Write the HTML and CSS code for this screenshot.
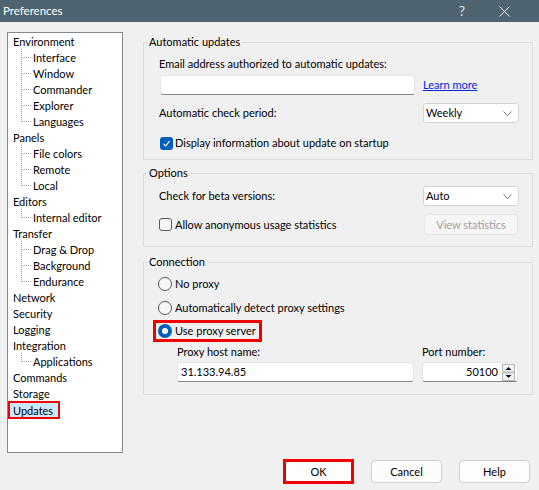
FILE: index.html
```html
<!DOCTYPE html>
<html lang="en">
<head>
    <meta charset="UTF-8">
    <title>Preferences</title>
    <link rel="stylesheet" href="styles.css">
</head>
<body>
    <div class="titlebar">
        <span class="title">Preferences</span>
        <span class="help-btn">?</span>
        <svg class="close-btn" width="11" height="11" viewBox="0 0 11 11">
            <path d="M0.5 0.5L10.5 10.5M10.5 0.5L0.5 10.5" stroke="#e4e8ea" stroke-width="1"/>
        </svg>
    </div>

    <div class="main">
        <ul class="tree">
            <li class="node">Environment</li>
            <li class="leaf">Interface</li>
            <li class="leaf">Window</li>
            <li class="leaf">Commander</li>
            <li class="leaf">Explorer</li>
            <li class="leaf last">Languages</li>
            <li class="node">Panels</li>
            <li class="leaf">File colors</li>
            <li class="leaf">Remote</li>
            <li class="leaf last">Local</li>
            <li class="node">Editors</li>
            <li class="leaf last">Internal editor</li>
            <li class="node">Transfer</li>
            <li class="leaf">Drag &amp; Drop</li>
            <li class="leaf">Background</li>
            <li class="leaf last">Endurance</li>
            <li class="node">Network</li>
            <li class="node">Security</li>
            <li class="node">Logging</li>
            <li class="node">Integration</li>
            <li class="leaf last">Applications</li>
            <li class="node">Commands</li>
            <li class="node">Storage</li>
            <li class="node"><span class="selected">Updates</span></li>
        </ul>

        <div class="pages">
            <fieldset class="group group-updates">
                <legend>Automatic updates</legend>
                <div class="group-body">
                    <div class="label-row">Email address authorized to automatic updates:</div>
                    <div class="input-row">
                        <div class="textbox email-box"></div>
                        <a class="link" href="#">Learn more</a>
                    </div>
                    <div class="field-row">
                        <span class="field-label">Automatic check period:</span>
                        <div class="combo">
                            <span>Weekly</span>
                            <svg width="9" height="5" viewBox="0 0 9 5"><path d="M0.5 0.5L4.5 4.5L8.5 0.5" fill="none" stroke="#7a7a7a" stroke-width="1"/></svg>
                        </div>
                    </div>
                    <label class="check check-startup">
                        <svg class="box" width="13" height="13" viewBox="0 0 13 13">
                            <rect width="13" height="13" rx="3" fill="#005fb8"/>
                            <path d="M3.5 6.8L5.6 8.9L9.6 4.2" fill="none" stroke="#fff" stroke-width="1.1"/>
                        </svg>
                        <span>Display information about update on startup</span>
                    </label>
                </div>
            </fieldset>

            <fieldset class="group group-options">
                <legend>Options</legend>
                <div class="group-body">
                    <div class="field-row beta-row">
                        <span class="field-label">Check for beta versions:</span>
                        <div class="combo">
                            <span>Auto</span>
                            <svg width="9" height="5" viewBox="0 0 9 5"><path d="M0.5 0.5L4.5 4.5L8.5 0.5" fill="none" stroke="#7a7a7a" stroke-width="1"/></svg>
                        </div>
                    </div>
                    <div class="field-row stats-row">
                        <label class="check">
                            <span class="box unchecked"></span>
                            <span>Allow anonymous usage statistics</span>
                        </label>
                        <button class="btn-disabled" disabled>View statistics</button>
                    </div>
                </div>
            </fieldset>

            <fieldset class="group group-connection">
                <legend>Connection</legend>
                <div class="group-body">
                    <label class="radio radio-first">
                        <span class="dot"></span>
                        <span>No proxy</span>
                    </label>
                    <label class="radio">
                        <span class="dot"></span>
                        <span>Automatically detect proxy settings</span>
                    </label>
                    <label class="radio radio-marked">
                        <span class="dot on"></span>
                        <span>Use proxy server</span>
                    </label>
                    <div class="proxy-labels">
                        <span class="host-col">Proxy host name:</span>
                        <span class="port-col">Port number:</span>
                    </div>
                    <div class="proxy-inputs">
                        <div class="textbox host-box">31.133.94.85</div>
                        <div class="textbox port-box">
                            <span>50100</span>
                            <svg class="spin" width="13" height="17" viewBox="0 0 13 17">
                                <rect x="0.5" y="0.5" width="12" height="7.5" fill="#f4f4f4" stroke="#b4b4b4"/>
                                <rect x="0.5" y="9" width="12" height="7.5" fill="#f4f4f4" stroke="#b4b4b4"/>
                                <path d="M3.5 6L6.5 3L9.5 6Z" fill="#111"/>
                                <path d="M3.5 11L6.5 14L9.5 11Z" fill="#111"/>
                            </svg>
                        </div>
                    </div>
                </div>
            </fieldset>
        </div>
    </div>

    <div class="footer">
        <button class="btn btn-marked">OK</button>
        <button class="btn">Cancel</button>
        <button class="btn">Help</button>
    </div>
</body>
</html>
```

FILE: styles.css
```css
* {
    box-sizing: border-box;
}

body {
    margin: 0;
    background: #f0f0f0;
    font-family: Lato, "Noto Sans", sans-serif;
    font-size: 11px;
    line-height: 16px;
    color: #000;
}

/* window caption */
.titlebar {
    height: 22px;
    background: #4f6471;
    display: flex;
    align-items: center;
    padding: 0 0 0 3px;
    color: #fff;
}

.title {
    flex: 1;
    font-size: 11.5px;
}

.help-btn {
    color: #dfe4e7;
    font-size: 14px;
    margin-right: 34px;
}

.close-btn {
    margin-right: 29px;
}

/* page list + settings */
.main {
    display: flex;
    padding: 10px 0 0 7px;
    gap: 20px;
}

.tree {
    list-style: none;
    margin: 0;
    padding: 0;
    width: 116px;
    height: 421px;
    background: #fff;
    border: 1px solid #828790;
}

.tree li {
    height: 16px;
    padding-top: 1px;
    white-space: nowrap;
}

.tree .node {
    padding-left: 5px;
}

.tree .leaf {
    padding-left: 25px;
    background-image:
        repeating-linear-gradient(to bottom, #a0a0a0 0 1px, transparent 1px 2px),
        repeating-linear-gradient(to right, #a0a0a0 0 1px, transparent 1px 2px);
    background-size: 1px 16px, 9px 1px;
    background-position: 13px 0, 14px 8px;
    background-repeat: no-repeat;
}

.tree .leaf.last {
    background-size: 1px 9px, 9px 1px;
}

.tree .selected {
    display: inline-block;
    margin: -1px 0 0 -5px;
    padding: 1px 5px 0 3px;
    line-height: 13px;
    background: #cce8ff;
    border: 2px solid #f00000;
}

.pages {
    width: 390px;
    padding-top: 2px;
}

/* group boxes */
.group {
    margin: 0;
    min-width: 0;
    padding: 0 13px 8px 3px;
    border: 1px solid #dcdcdc;
}

.group legend {
    padding: 0 2px;
    line-height: 16px;
}

.group-body {
    padding-left: 12px;
}

.group-options {
    margin-top: 5px;
    padding-bottom: 11px;
}

.group-connection {
    margin-top: 7px;
    padding-bottom: 12px;
}

.label-row {
    margin-top: 6px;
}

.input-row {
    display: flex;
    align-items: center;
    margin-top: 3px;
    height: 20px;
}

.textbox {
    height: 20px;
    background: #fff;
    border: 1px solid #e3e3e3;
    border-bottom-color: #868686;
    border-radius: 3px;
}

.email-box {
    width: 255px;
    margin-left: 1px;
}

.link {
    margin-left: 8px;
    color: #0026e0;
    text-decoration: underline;
}

.field-row {
    display: flex;
    align-items: center;
    justify-content: space-between;
    height: 20px;
    margin-top: 8px;
}

.combo {
    width: 96px;
    height: 20px;
    display: flex;
    align-items: center;
    justify-content: space-between;
    padding: 0 6px 0 2px;
    background: #fff;
    border: 1px solid #d4d4d4;
    border-radius: 3px;
}

.check,
.radio {
    display: flex;
    align-items: center;
    height: 16px;
    white-space: nowrap;
}

.check .box {
    width: 13px;
    height: 13px;
    margin-right: 2px;
    flex: none;
}

.check-startup {
    margin-top: 12px;
    padding-left: 1px;
}

.box.unchecked {
    display: block;
    margin-right: 3px;
    border: 1px solid #5c5c5c;
    border-radius: 3px;
    background: #f7f7f7;
}

.beta-row {
    margin-top: 5px;
}

.stats-row {
    height: 21px;
}

.btn-disabled {
    width: 94px;
    height: 21px;
    margin-right: 1px;
    font: inherit;
    color: #a0a0a0;
    background: #f6f6f6;
    border: 1px solid #e6e6e6;
    border-radius: 4px;
}

/* proxy radios */
.radio {
    margin-top: 8px;
}

.radio-first {
    margin-top: 6px;
}

.radio .dot {
    flex: none;
    width: 14px;
    height: 14px;
    margin: 0 3px 0 -1px;
    border: 1px solid #5a5a5a;
    border-radius: 50%;
    background: #f7f7f7;
}

.radio .dot.on {
    border: 4px solid #005fb8;
    background: #fff;
}

.radio-marked {
    width: 109px;
    height: 22px;
    margin: 4px 0 0 -6px;
    padding-left: 6px;
    border: 3px solid #f00000;
}

.radio-marked .dot {
    margin-left: -4px;
}

.proxy-labels,
.proxy-inputs {
    display: flex;
    gap: 8px;
    margin-top: 2px;
    padding-left: 18px;
}

.host-col,
.host-box {
    width: 237px;
}

.port-col,
.port-box {
    width: 96px;
}

.host-box {
    padding: 1px 3px;
}

.port-box {
    display: flex;
    align-items: center;
    justify-content: flex-end;
    padding-right: 2px;
}

.spin {
    margin-left: 4px;
}

/* dialog buttons */
.footer {
    display: flex;
    justify-content: flex-end;
    gap: 17px;
    padding: 7px 9px 0 0;
}

.btn {
    width: 71px;
    height: 23px;
    font: inherit;
    color: #000;
    background: #fdfdfd;
    border: 1px solid #d0d0d0;
    border-radius: 4px;
}

.btn-marked {
    height: 25px;
    margin-top: -1px;
    border: 3px solid #f00000;
    border-radius: 0;
}
```
